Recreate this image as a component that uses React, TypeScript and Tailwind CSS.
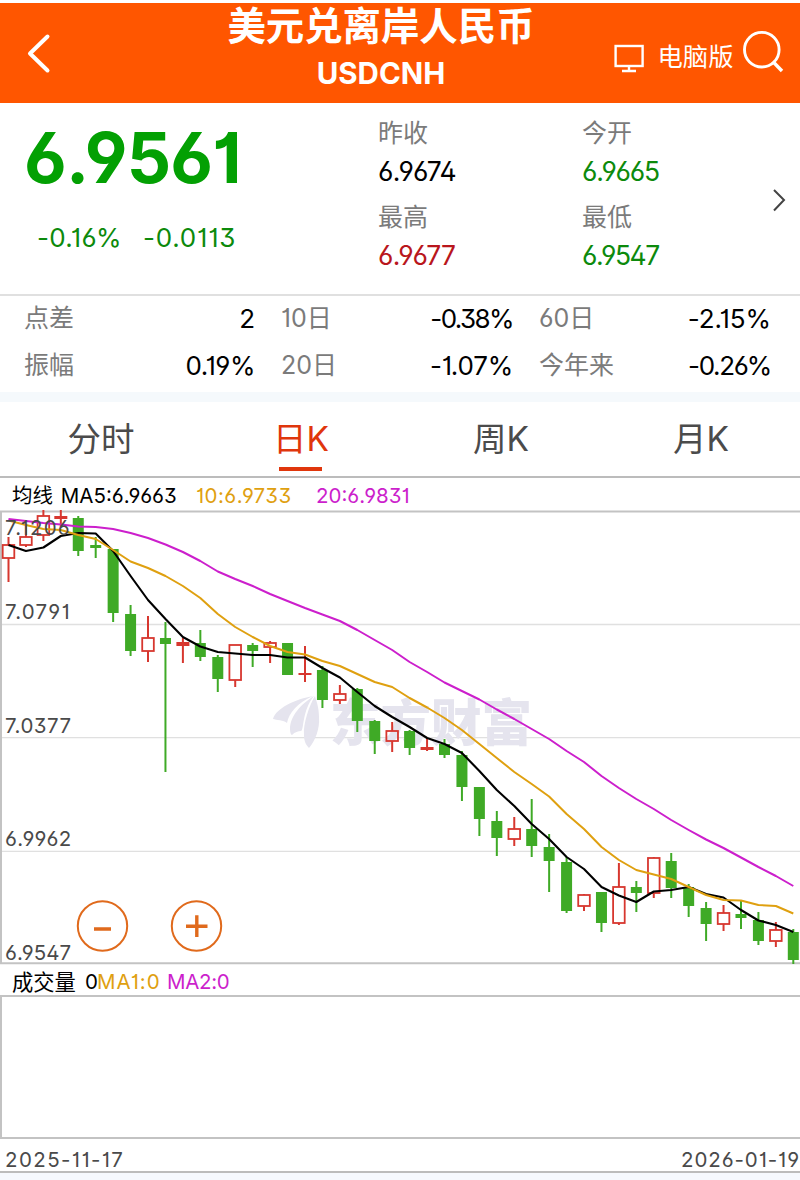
import React from "react";

type Candle = [up: 0 | 1, high: number, top: number, bottom: number, low: number];

const CHART_TOP = 510;
const STEP = 17.44;
const xAt = (i: number) => 8.5 + i * STEP;

const candles: Candle[] = [
  [1, 537, 545, 558, 582], [1, 525, 537, 545, 547], [1, 510, 516, 535, 541], [1, 510, 516, 519, 527],
  [0, 516, 518, 551, 556], [0, 537, 545, 548, 558], [0, 549, 549, 613, 622], [0, 605, 614, 651, 656],
  [1, 616, 638, 651, 662], [0, 622, 638, 644, 772], [1, 638, 642, 646, 663], [0, 630, 643, 657, 661],
  [0, 655, 657, 679, 692], [1, 645, 645, 680, 687], [0, 643, 645, 651, 667], [1, 641, 643, 647, 663],
  [0, 643, 643, 675, 675], [1, 646, 673, 675, 682], [0, 666, 670, 700, 708], [1, 685, 694, 700, 704],
  [0, 688, 689, 721, 732], [0, 720, 721, 741, 754], [1, 722, 731, 741, 752], [0, 730, 731, 748, 755],
  [1, 738, 747, 750, 751], [0, 739, 744, 755, 758], [0, 751, 755, 787, 801], [0, 787, 787, 819, 836],
  [0, 811, 821, 838, 856], [1, 817, 829, 839, 846], [0, 799, 829, 846, 857], [0, 834, 847, 861, 892],
  [0, 857, 862, 911, 913], [1, 894, 895, 906, 911], [0, 892, 892, 923, 932], [1, 863, 887, 923, 925],
  [0, 881, 887, 893, 912], [1, 857, 858, 893, 898], [0, 853, 861, 888, 898], [0, 884, 887, 906, 917],
  [0, 902, 908, 924, 941], [1, 905, 913, 924, 931], [0, 901, 914, 918, 929], [0, 912, 920, 941, 945],
  [1, 922, 930, 941, 947], [0, 929, 932, 960, 964],
];

const ma5 = [
  545, 551, 547.5, 536, 533, 533.5, 551, 576, 600, 619, 637, 646.5, 652, 653.5, 655, 655, 657.5, 657.5, 668, 677.5,
  692, 706, 717, 727, 738, 744, 753, 771, 790, 806, 824, 839, 857, 869, 887, 895.5, 902, 891.5, 890, 887, 894, 897.5,
  910, 920.5, 925, 932,
];
const ma10 = [
  520.5, 525, 529, 530, 535, 539, 550, 561.5, 568, 576, 586, 598, 614, 627, 637, 646, 652, 654.5, 661, 666, 674, 682,
  687, 698, 707.5, 718, 730, 744, 758, 772, 784, 796.5, 814, 829, 847, 860, 870, 874.5, 879, 887, 895, 900, 900.5, 905,
  906, 913.5,
];
const ma20 = [
  519, 521, 523, 524.5, 526.5, 527, 529, 533, 538, 544.5, 552, 561, 571.5, 579, 586, 594, 601, 608, 614.5, 621, 630,
  640, 650, 662, 672, 682.5, 691, 699.5, 709.5, 719, 729, 739, 751, 762, 776, 788, 799, 809, 820, 830, 839.5, 848,
  857.5, 867, 876, 886,
];

const points = (values: number[]) => values.map((y, i) => `${xAt(i).toFixed(1)},${y}`).join(" ");

const NUM = "[font-feature-settings:'ss01','cv01','cv03','cv04']";

function Quote({ label, value, style }: { label: string; value: string; style: string }) {
  return (
    <div>
      <div className="h-[38.5px] text-[25px] leading-[38.5px] text-[#7b7b7b]">{label}</div>
      <div className={`h-[38.5px] text-[26.5px] leading-[37px] ${style}`}>{value}</div>
    </div>
  );
}

function Stat({ label, value, style = "" }: { label: string; value: string; style?: string }) {
  return (
    <div className="flex h-[47px] justify-between leading-[46px]">
      <span className="text-[25px] leading-[45px] text-[#7b7b7b]">{label}</span>
      <span className={`text-[26px] text-black ${style}`}>{value}</span>
    </div>
  );
}

function Tab({ label, active }: { label: string; active?: boolean }) {
  return (
    <div className={`flex flex-1 flex-col items-center text-[33.5px] leading-[60px] ${active ? "text-[#e0360c]" : "text-[#4b4b4b]"}`}>
      <span className="mt-[7px] ml-[2px] h-[58px]">{label}</span>
      {active && <span className="ml-[1px] h-[4px] w-[43px] bg-[#e0360c]" />}
    </div>
  );
}

function KChart() {
  return (
    <svg viewBox={`0 ${CHART_TOP} 800 456`} className="block h-[456px] w-[800px]">
      <g stroke="#e0e0e0" strokeWidth="1.3">
        <line x1="1" x2="800" y1="624.5" y2="624.5" />
        <line x1="1" x2="800" y1="737.7" y2="737.7" />
        <line x1="1" x2="800" y1="851.3" y2="851.3" />
      </g>
      <g stroke="#c3c3c3" strokeWidth="2">
        <line x1="0" x2="800" y1="511.5" y2="511.5" />
        <line x1="1" x2="1" y1="511" y2="964" />
        <line x1="0" x2="800" y1="963.3" y2="963.3" />
      </g>
      <g fill="#e5e4ee">
        <path d="M313 696 C296 699 276 708 273 719 C276 720 284 720 287 723 C289 713 297 703 313 696Z" />
        <path d="M314 696 C301 704 290 716 290 729 C290 732 291 735 292 735 C295 732 298 731 301 731 C304 731 302 710 314 696Z" />
        <path d="M315 696 C309 706 303 724 304 735 C304 741 306 745 309 748 C315 741 320 729 319 717 C319 707 316 700 315 696Z" />
        <text
          x="330"
          y="740.5"
          fontSize="50.5"
          fontWeight="900"
          textLength="202"
          fontFamily="'Noto Sans CJK SC', sans-serif"
        >
          东方财富
        </text>
      </g>
      {candles.map(([up, high, top, bottom, low], i) => {
        const x = xAt(i);
        const color = up ? "#d7372f" : "#3faa26";
        const hollow = up === 1 && bottom - top > 3.5 && i !== 10;
        return (
          <g key={i} stroke={color}>
            <line x1={x} x2={x} y1={high} y2={top} strokeWidth="2" />
            <line x1={x} x2={x} y1={bottom} y2={low} strokeWidth="2" />
            {hollow ? (
              <rect x={x - 5.8} y={top} width="11.6" height={bottom - top} fill="none" strokeWidth="1.8" />
            ) : up ? (
              <rect x={x - 6.5} y={top} width="13" height={bottom - top} fill={color} stroke="none" />
            ) : (
              <rect x={x - 5.5} y={top} width="11" height={bottom - top} fill={color} stroke="none" />
            )}
          </g>
        );
      })}
      <g fill="none" strokeLinejoin="round">
        <polyline points={points(ma5)} stroke="#000" strokeWidth="2.1" />
        <polyline points={points(ma10)} stroke="#dfa010" strokeWidth="2" />
        <polyline points={points(ma20)} stroke="#cc1fcc" strokeWidth="2" />
      </g>
    </svg>
  );
}

const axis = "absolute left-[5px] text-[20.5px] leading-[24px] text-[#4a4a4a]";

export default function App() {
  return (
    <div className={`flex h-[1180px] w-[800px] flex-col overflow-hidden bg-white font-['Inter','Noto_Sans_CJK_SC',sans-serif] ${NUM}`}>
      <header className="mt-[3px] flex h-[100px] shrink-0 justify-between bg-[#ff5600] text-white">
        <div className="flex w-[228px] pt-[30px] pl-[26px]">
          <svg className="h-[42px] w-[26px]" viewBox="0 0 26 42" fill="none" stroke="#fff" strokeWidth="4" strokeLinecap="round" strokeLinejoin="round">
            <path d="M21.5 3.5 L4 20.5 L21.5 37.5" />
          </svg>
        </div>
        <div className="flex flex-col items-center whitespace-nowrap">
          <div className="h-[46px] text-[38.4px] leading-[46px] font-bold">美元兑离岸人民币</div>
          <div className="h-[48px] text-[29.5px] leading-[49px] font-bold">USDCNH</div>
        </div>
        <div className="flex w-[266px] pl-[79px]">
          <svg className="mt-[39px] h-[32px] w-[32px] shrink-0" viewBox="0 0 32 32" fill="none" stroke="#fff" strokeWidth="2.4">
            <rect x="1.6" y="4" width="27" height="20" />
            <path d="M15 24 V29 M8 29 H22" />
          </svg>
          <span className="ml-[12px] pt-[34px] text-[25.3px] leading-[40px] whitespace-nowrap">电脑版</span>
          <svg className="mt-[25px] ml-[8px] h-[46px] w-[46px] shrink-0" viewBox="0 0 46 46" fill="none" stroke="#fff" strokeWidth="2.9">
            <circle cx="20.8" cy="21.7" r="17.3" />
            <path d="M31.8 33.5 L41 43" strokeWidth="3.4" />
          </svg>
        </div>
      </header>

      <section className="flex h-[191px] shrink-0">
        <div className="w-[378px]">
          <div className="mt-[16px] h-[80px] pl-[24px] text-[69.5px] leading-[79px] font-bold tracking-[-0.8px] text-[#03a003]">6.9561</div>
          <div className="mt-[19px] flex h-[40px] gap-[21px] pl-[37px] text-[26px] leading-[40px] text-[#0c8a0c]">
            <span className="tracking-[0.3px]">-0.16%</span>
            <span className="tracking-[0.8px]">-0.0113</span>
          </div>
        </div>
        <div className="grid w-[378px] grid-cols-[204px_1fr] content-start gap-y-[7px] pt-[11px]">
          <Quote label="昨收" value="6.9674" style="tracking-[-0.6px] text-black" />
          <Quote label="今开" value="6.9665" style="tracking-[-1.1px] text-[#0c8a0c]" />
          <Quote label="最高" value="6.9677" style="tracking-[-0.7px] text-[#b9161c]" />
          <Quote label="最低" value="6.9547" style="tracking-[-1.4px] text-[#0c8a0c]" />
        </div>
        <svg className="mt-[84px] ml-[16px] h-[26px] w-[18px]" viewBox="0 0 18 26" fill="none" stroke="#444" strokeWidth="2">
          <path d="M2 3 L12 13 L2 23.5" />
        </svg>
      </section>

      <section className="grid h-[98px] shrink-0 grid-cols-[231px_232px_232px] content-start gap-x-[26px] border-t-2 border-[#e0e0e0] pl-[24px]">
        <Stat label="点差" value="2" />
        <Stat label="10日" value="-0.38%" style="tracking-[-1.6px]" />
        <Stat label="60日" value="-2.15%" style="tracking-[-0.1px]" />
        <Stat label="振幅" value="0.19%" style="tracking-[-0.5px]" />
        <Stat label="20日" value="-1.07%" style="tracking-[-0.2px]" />
        <Stat label="今年来" value="-0.26%" style="tracking-[-1.3px]" />
      </section>
      <div className="h-[10px] shrink-0 bg-[#f5f9fc]" />

      <nav className="flex h-[76px] shrink-0 border-b-2 border-[#bcbcbc]">
        <Tab label="分时" />
        <Tab label="日K" active />
        <Tab label="周K" />
        <Tab label="月K" />
      </nav>

      <div className="flex h-[32px] shrink-0 pl-[12px] text-[20.5px] leading-[36px] whitespace-nowrap">
        <span className="w-[184px] [word-spacing:2px] text-black">均线 MA5:6.9663</span>
        <span className="w-[120px] tracking-[0.45px] text-[#dfa010]">10:6.9733</span>
        <span className="text-[#cc1fcc]">20:6.9831</span>
      </div>

      <div className="relative h-[456px] shrink-0">
        <KChart />
        <span className={`${axis} top-[6px] tracking-[1.2px]`}>7.1206</span>
        <span className={`${axis} top-[90px] tracking-[1.2px]`}>7.0791</span>
        <span className={`${axis} top-[204px] tracking-[0.5px]`}>7.0377</span>
        <span className={`${axis} top-[317px] tracking-[0.3px]`}>6.9962</span>
        <span className={`${axis} top-[431px]`}>6.9547</span>
        <svg className="absolute top-[388px] left-[75px] h-[56px] w-[150px]" viewBox="0 0 150 56" fill="none" stroke="#e06a1c" strokeWidth="2">
          <circle cx="27.5" cy="28" r="24.7" />
          <circle cx="121.5" cy="28" r="24.7" />
          <path d="M19 31 H36 M111 28.3 H132.5 M121.8 17.3 V39" strokeWidth="3.4" />
        </svg>
      </div>

      <div className="flex h-[29px] shrink-0 pl-[12px] text-[20.5px] leading-[32px] whitespace-nowrap">
        <span className="w-[73px] text-[21.3px] text-black">成交量</span>
        <span className="w-[12px] text-black">0</span>
        <span className="w-[70px] tracking-[0.9px] text-[#dfa010]">MA1:0</span>
        <span className="tracking-[-0.3px] text-[#cc1fcc]">MA2:0</span>
      </div>
      <div className="h-[144px] shrink-0 border-y-2 border-l-2 border-[#c3c3c3]" />
      <div className="flex h-[34px] shrink-0 justify-between border-b-2 border-[#bcbcbc] pl-[5px] text-[20.5px] leading-[42px] text-[#4a4a4a]">
        <span className="tracking-[1.4px]">2025-11-17</span>
        <span className="tracking-[0.9px]">2026-01-19</span>
      </div>
      <div className="h-[7px] shrink-0 bg-[#f6f9fe]" />
    </div>
  );
}
